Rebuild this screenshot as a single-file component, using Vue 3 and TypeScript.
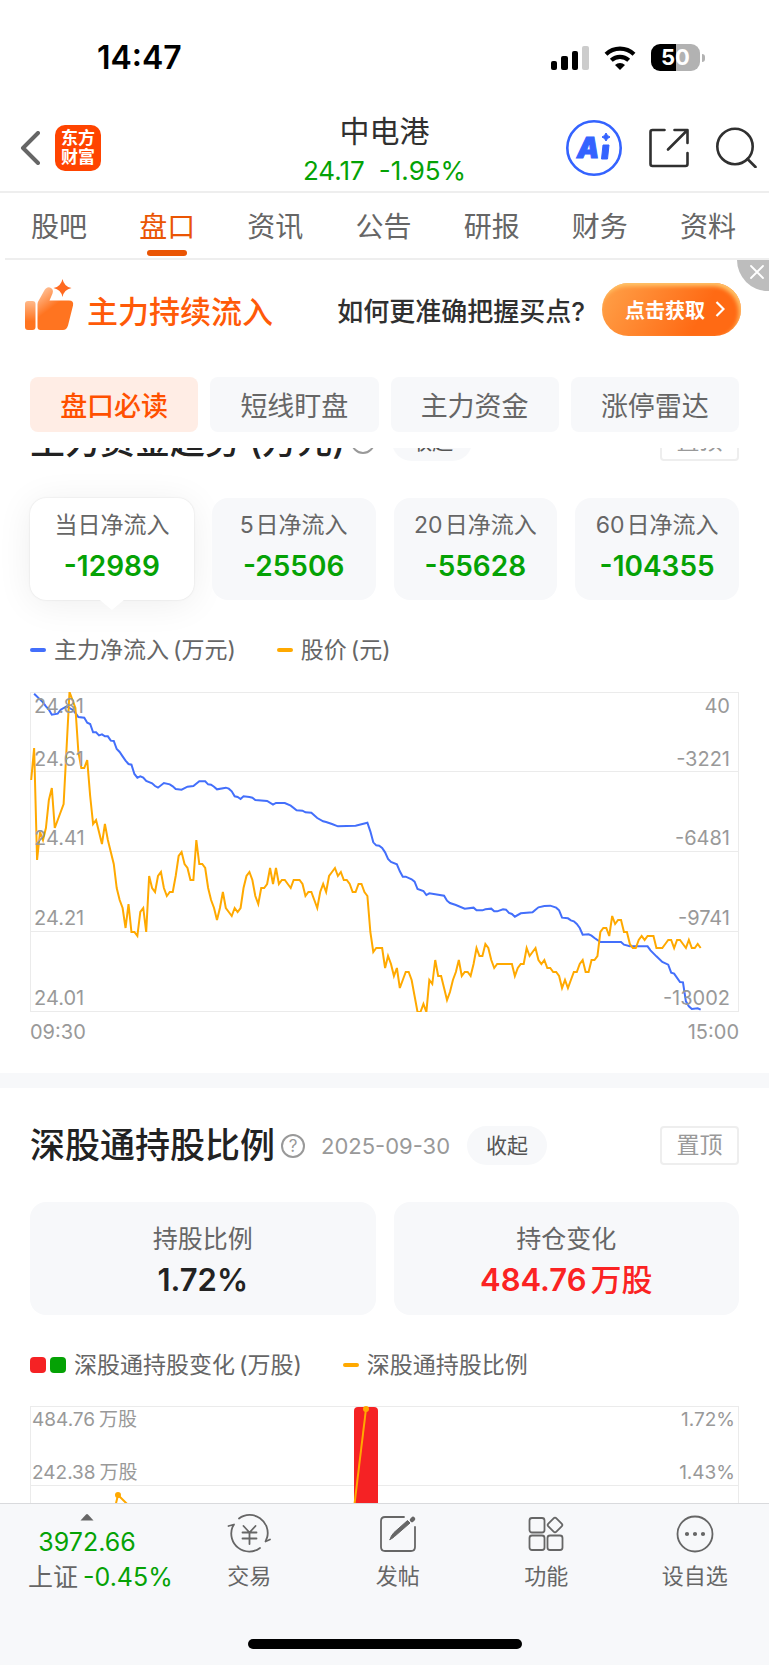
<script setup lang="ts">
import { ref } from 'vue'

type Point = [number, number]

const tabs = ['股吧', '盘口', '资讯', '公告', '研报', '财务', '资料']
const activeTab = ref('盘口')

const modules = ['盘口必读', '短线盯盘', '主力资金', '涨停雷达']
const activeModule = ref('盘口必读')

const periods = [
  { prefix: '', label: '当日净流入', value: '-12989' },
  { prefix: '5', label: '日净流入', value: '-25506' },
  { prefix: '20', label: '日净流入', value: '-55628' },
  { prefix: '60', label: '日净流入', value: '-104355' },
]
const activePeriod = ref(0)
const bannerOpen = ref(true)

const priceAxis = ['24.81', '24.61', '24.41', '24.21', '24.01']
const flowAxis = ['40', '-3221', '-6481', '-9741', '-13002']

// Cents below the session high of 24.81, one value per trading minute.
const priceDrops: number[] = [
  22, 14, 42, 35, 37, 34, 27, 24, 34, 32, 30, 28, 14, 0, 2, 4, 15, 19, 19, 17,
  26, 33, 32, 35, 38, 33, 37, 40, 43, 49, 52, 54, 59, 53, 60, 60, 61, 55, 54, 60,
  46, 49, 50, 46, 45, 49, 51, 50, 50, 46, 41, 40, 43, 44, 47, 47, 37, 43, 43, 44,
  49, 52, 54, 57, 54, 50, 54, 55, 56, 54, 55, 54, 49, 46, 45, 47, 51, 53, 49, 49,
  48, 44, 48, 44, 48, 47, 47, 48, 49, 47, 47, 47, 48, 51, 50, 50, 52, 54, 50, 48,
  50, 46, 45, 44, 46, 45, 47, 47, 48, 50, 50, 48, 48, 50, 51, 60, 65, 64, 64, 64,
  69, 66, 68, 71, 69, 74, 72, 70, 70, 72, 76, 80, 80, 78, 80, 72, 73, 67, 71, 71,
  74, 77, 75, 72, 70, 67, 71, 70, 70, 71, 68, 64, 66, 66, 63, 64, 67, 69, 68, 68,
  68, 68, 68, 68, 71, 69, 68, 68, 64, 66, 65, 64, 67, 68, 67, 69, 69, 70, 70, 71,
  74, 72, 74, 72, 70, 70, 68, 67, 70, 70, 67, 67, 66, 60, 59, 59, 61, 56, 58, 57,
  57, 60, 60, 63, 64, 64, 62, 61, 62, 61, 61, 61, 64, 64, 64, 63, 62, 62, 64, 62,
  62, 63, 64, 62, 64, 64, 63, 64,
]

// [minute, depth] pairs; depth runs from 0 (40) to 960 (-13002).
const flowPoints: Point[] = [
  [1, 5], [4, 31], [5, 43], [6, 53], [7, 68], [9, 65], [10, 53], [12, 43], [14, 53], [15, 63],
  [16, 75], [18, 77], [19, 92], [20, 96], [21, 121], [22, 121], [23, 130], [24, 127], [25, 133],
  [26, 133], [27, 146], [28, 147], [29, 171], [30, 180], [31, 193], [32, 206], [33, 216],
  [34, 218], [35, 246], [36, 257], [37, 253], [38, 257], [39, 267], [41, 274], [42, 282],
  [43, 287], [45, 273], [47, 277], [48, 283], [49, 291], [51, 293], [53, 284], [55, 282],
  [57, 268], [59, 268], [60, 277], [61, 278], [62, 284], [63, 292], [66, 287], [67, 290],
  [68, 298], [69, 313], [70, 315], [71, 321], [72, 313], [74, 315], [75, 317], [76, 324],
  [80, 327], [82, 338], [83, 333], [86, 333], [88, 341], [90, 355], [92, 356], [93, 361],
  [95, 362], [97, 378], [99, 388], [100, 390], [102, 396], [104, 403], [110, 401], [114, 392],
  [115, 418], [116, 451], [117, 460], [118, 461], [119, 468], [120, 481], [121, 501], [122, 510],
  [124, 517], [125, 538], [126, 554], [127, 554], [129, 562], [130, 569], [131, 591], [133, 597],
  [134, 609], [135, 604], [140, 611], [141, 626], [142, 633], [144, 639], [147, 650], [150, 647],
  [151, 655], [153, 655], [154, 652], [156, 650], [157, 658], [158, 658], [160, 652], [161, 653],
  [162, 663], [163, 666], [164, 674], [166, 664], [170, 661], [171, 653], [172, 646], [174, 642],
  [176, 641], [178, 647], [179, 655], [180, 677], [182, 679], [183, 685], [184, 688], [185, 696],
  [186, 708], [187, 728], [189, 727], [190, 731], [191, 738], [193, 750], [200, 750], [201, 758],
  [203, 763], [209, 763], [210, 775], [212, 793], [214, 810], [216, 818], [217, 842], [218, 845],
  [220, 870], [221, 871], [222, 928], [223, 943], [224, 951], [226, 949], [227, 953],
]

const toPoints = (points: Point[]): string => points.map(([x, y]) => `${x},${y}`).join(' ')
const priceLine = toPoints(priceDrops.map((drop, minute): Point => [minute, drop * 12]))
const flowLine = toPoints(flowPoints)
</script>

<template>
  <div class="app">
    <div class="status">
      <span class="clock">14:47</span>
      <div class="indicators">
        <svg class="signal" viewBox="0 0 38 24" aria-hidden="true">
          <rect x="0" y="15" width="6" height="9" rx="2" />
          <rect x="10" y="10" width="7" height="14" rx="2" />
          <rect x="21" y="5" width="6" height="19" rx="2" />
          <rect x="31" y="0" width="7" height="24" rx="2" fill="#ccc" />
        </svg>
        <svg class="wifi" viewBox="0 0 32 24" aria-hidden="true">
          <path d="M2 8.2a20.5 20.5 0 0 1 28 0" fill="none" stroke="#000" stroke-width="4.2" />
          <path d="M7.3 14.2a13 13 0 0 1 17.4 0" fill="none" stroke="#000" stroke-width="4.2" />
          <path d="M16 24l-5-5a7.4 7.4 0 0 1 10 0z" />
        </svg>
        <div class="battery"><span class="level">50</span><i class="cap"></i></div>
      </div>
    </div>

    <header class="nav">
      <div class="nav-left">
        <button class="icon-button" aria-label="返回">
          <svg width="20" height="34" viewBox="0 0 20 34"><path d="M18 2 3 17l15 15" fill="none" stroke="#666" stroke-width="4" stroke-linecap="round" stroke-linejoin="round" /></svg>
        </button>
        <a class="logo" href="#"><span>东方</span><span>财富</span></a>
      </div>
      <div class="quote">
        <h1>中电港</h1>
        <p><span>24.17</span><span>-1.95%</span></p>
      </div>
      <div class="nav-right">
        <button class="icon-button" aria-label="智能助手">
          <svg width="56" height="56" viewBox="0 0 56 56">
            <circle cx="28" cy="28" r="26.7" fill="none" stroke="#3463ff" stroke-width="2.6" />
            <text class="ai" x="11" y="38">A</text>
            <path d="M37 25h6l-1.500 14h-6z" fill="#3463ff" stroke="#3463ff" stroke-width="1" stroke-linejoin="round" />
            <path d="M40 13q1 3 4 4-3 1-4 4-1-3-4-4 3-1 4-4z" fill="#3463ff" stroke="#3463ff" stroke-width="1" />
          </svg>
        </button>
        <button class="icon-button" aria-label="分享">
          <svg width="40" height="40" viewBox="0 0 40 40" fill="none" stroke="#303030" stroke-width="2.600" stroke-linecap="round" stroke-linejoin="round">
            <path d="M15.500 2H3.500Q1.500 2 1.500 4v32q0 2 2 2h33q2 0 2-2V25" />
            <path d="M25.500 2h13v13M38 2.500 19 21.500" />
          </svg>
        </button>
        <button class="icon-button" aria-label="搜索">
          <svg width="41" height="41" viewBox="0 0 41 41" fill="none" stroke="#303030" stroke-width="2.600" stroke-linecap="round">
            <circle cx="19" cy="19.500" r="17.700" />
            <path d="m31.500 32 8 8" />
          </svg>
        </button>
      </div>
    </header>

    <nav class="tabs">
      <button
        v-for="tab in tabs"
        :key="tab"
        class="tab"
        :class="{ active: tab === activeTab }"
        @click="activeTab = tab"
      >{{ tab }}</button>
    </nav>

    <aside v-if="bannerOpen" class="banner">
      <svg class="thumb" width="49" height="52" viewBox="0 0 49 52" aria-hidden="true">
        <defs>
          <linearGradient id="cuff" x1="0" y1="0" x2="0" y2="1">
            <stop offset="0" stop-color="#ffb98a" /><stop offset="0.7" stop-color="#ff7420" />
          </linearGradient>
          <linearGradient id="hand" x1="0.1" y1="0" x2="0.6" y2="0.8">
            <stop offset="0" stop-color="#ffc9a4" /><stop offset="0.6" stop-color="#ff7420" />
          </linearGradient>
        </defs>
        <rect x="0" y="22" width="10.500" height="29" rx="3" fill="url(#cuff)" />
        <path d="M12.500 25q0-2 1.500-4l5-9q2.500-4.500 6-3.500 4 1.500 2.500 6l-3 7H44q5 0 4 5l-5 20q-1.500 4.500-5 4.500H15.500q-3 0-3-3z" fill="url(#hand)" />
        <path d="M37.500 0q1.500 7.500 9 9-7.500 1.500-9 9-1.500-7.500-9-9 7.500-1.500 9-9z" fill="#ff6a20" />
      </svg>
      <strong class="banner-title">主力持续流入</strong>
      <span class="banner-text">如何更准确把握买点?</span>
      <button class="banner-action">
        点击获取
        <svg width="10" height="16" viewBox="0 0 10 16"><path d="m1.500 1 7 7-7 7" fill="none" stroke="#fff" stroke-width="2.200" /></svg>
      </button>
      <button class="banner-close" aria-label="关闭" @click="bannerOpen = false">
        <svg width="14" height="14" viewBox="0 0 14 14"><path d="m1 1 12 12M13 1 1 13" stroke="#fff" stroke-width="1.800" stroke-linecap="round" /></svg>
      </button>
    </aside>

    <div class="modules">
      <button
        v-for="name in modules"
        :key="name"
        class="module"
        :class="{ active: name === activeModule }"
        @click="activeModule = name"
      >{{ name }}</button>
    </div>

    <main class="content">
      <div class="scrolled">
        <section class="section">
          <div class="section-head">
            <h2>主力资金趋势 (万元)</h2>
            <button class="help" aria-label="说明">?</button>
            <button class="fold">收起</button>
            <button class="pin">置顶</button>
          </div>
          <div class="cards four">
            <button
              v-for="(period, index) in periods"
              :key="period.value"
              class="card flow-card"
              :class="{ active: index === activePeriod }"
              @click="activePeriod = index"
            >
              <span class="card-label"><span v-if="period.prefix" class="number">{{ period.prefix }}</span>{{ period.label }}</span>
              <span class="card-value fall">{{ period.value }}</span>
            </button>
          </div>
          <div class="legend">
            <span class="legend-item"><i class="dash blue"></i>主力净流入<span class="unit">(万元)</span></span>
            <span class="legend-item"><i class="dash amber"></i>股价<span class="unit">(元)</span></span>
          </div>
          <div class="plot">
            <div class="grid-lines"><i v-for="row in 4" :key="row"></i></div>
            <svg class="lines" viewBox="-0.4 0 240.4 960" preserveAspectRatio="none" role="img" aria-label="主力净流入与股价走势">
              <polyline class="line flow-line" :points="flowLine" />
              <polyline class="line price-line" :points="priceLine" />
            </svg>
            <div class="axis"><span v-for="value in priceAxis" :key="value">{{ value }}</span></div>
            <div class="axis right"><span v-for="value in flowAxis" :key="value">{{ value }}</span></div>
          </div>
          <div class="times"><span>09:30</span><span>15:00</span></div>
        </section>

        <section class="section divided">
          <div class="section-head">
            <h2>深股通持股比例</h2>
            <button class="help" aria-label="说明">?</button>
            <time datetime="2025-09-30">2025-09-30</time>
            <button class="fold">收起</button>
            <button class="pin">置顶</button>
          </div>
          <div class="cards two">
            <div class="card holding-card">
              <span class="card-label">持股比例</span>
              <span class="card-value">1.72%</span>
            </div>
            <div class="card holding-card">
              <span class="card-label">持仓变化</span>
              <span class="card-value rise"><span class="number">484.76</span>万股</span>
            </div>
          </div>
          <div class="legend">
            <span class="legend-item"><i class="square red"></i><i class="square green"></i>深股通持股变化<span class="unit">(万股)</span></span>
            <span class="legend-item"><i class="dash amber"></i>深股通持股比例</span>
          </div>
          <div class="plot">
            <div class="grid-lines"><i v-for="row in 4" :key="row"></i></div>
            <svg class="lines" viewBox="0 0 709 320" preserveAspectRatio="none" role="img" aria-label="深股通持股变化与比例">
              <path d="M324 160V5q0-4 4-4h16q4 0 4 4v155z" fill="#f52224" />
              <polyline class="line ratio-line" points="66,180 88,89 160,160" />
              <polyline class="line ratio-line" points="317,160 336,3" />
              <path class="dot" d="M88 89h0M336 3h0" />
            </svg>
            <div class="axis tight"><span>484.76<b>万股</b></span><span>242.38<b>万股</b></span></div>
            <div class="axis tight right"><span>1.72%</span><span>1.43%</span></div>
          </div>
        </section>
      </div>
    </main>

    <footer class="toolbar">
      <div class="tools">
        <button class="index">
          <span class="index-top">
            <svg width="14" height="8" viewBox="0 0 14 8"><path d="M0.500 7.500 6 1.500q1-1 2 0l5.500 6z" fill="#666" /></svg>
            <span class="fall">3972.66</span>
          </span>
          <span class="index-name">上证<span class="fall index-change">-0.45%</span></span>
        </button>
        <button class="tool">
          <svg width="44" height="40" viewBox="0 0 44 40" fill="none" stroke="#666" stroke-width="1.800" stroke-linecap="round" stroke-linejoin="round">
            <path d="M12 4.500a18 18 0 0 1 28 19.500M1.500 12 7 10.500 5.500 13a18 18 0 0 0 27.500 21M43 25.500l-4.500 2 1.500-4" />
            <path d="m16.500 12 6 6.500 6-6.500M15.500 18.500h14M15.500 24.500h14M22.500 18.500V30" />
          </svg>
          交易
        </button>
        <button class="tool">
          <svg width="38" height="40" viewBox="0 0 38 40" fill="none" stroke="#666" stroke-width="1.800" stroke-linecap="round">
            <path d="M25 3H6Q2 3 2 7v26q0 4 4 4h26q4 0 4-4V13" />
            <path d="M11 25.500q1-4 4-7L28.500 6.500l2.500 2.500L15.500 22.500q-2 2-4.500 3z" fill="#666" stroke-width="1" />
            <path d="m33 6 1-1" stroke-width="4.500" />
          </svg>
          发帖
        </button>
        <button class="tool">
          <svg width="36" height="40" viewBox="0 0 36 40" fill="none" stroke="#666" stroke-width="1.800" stroke-linejoin="round">
            <rect x="1.500" y="4" width="15" height="14.500" rx="2.500" />
            <rect x="1.500" y="21.500" width="15" height="14.500" rx="2.500" />
            <rect x="19.500" y="21.500" width="15" height="14.500" rx="2.500" />
            <rect x="21.300" y="5.300" width="11.400" height="11.400" rx="2" transform="rotate(45 27 11)" />
          </svg>
          功能
        </button>
        <button class="tool">
          <svg width="38" height="40" viewBox="0 0 38 40" fill="none" stroke="#666" stroke-width="1.800">
            <circle cx="19" cy="20" r="17.500" />
            <path d="M11 20h0M19 20h0M27 20h0" stroke-width="4.200" stroke-linecap="round" />
          </svg>
          设自选
        </button>
      </div>
      <div class="home-bar"></div>
    </footer>
  </div>
</template>

<style>
body {
  margin: 0;
  background: #fff;
}
</style>

<style scoped>
.app {
  display: flex;
  flex-direction: column;
  height: 100vh;
  overflow: hidden;
  background: #fff;
  color: #666;
  font-family: Inter, "Noto Sans CJK SC", sans-serif;
  font-size: 22px;
}

.app *,
.app *::after {
  box-sizing: border-box;
}

button {
  margin: 0;
  padding: 0;
  border: 0;
  background: none;
  color: inherit;
  font: inherit;
  white-space: nowrap;
  cursor: pointer;
}

svg {
  display: block;
  flex: none;
}

h1,
h2,
p {
  margin: 0;
}

.fall {
  color: #05a205;
}

/* Status bar */
.status {
  display: flex;
  flex: none;
  align-items: center;
  justify-content: space-between;
  height: 104px;
  padding: 11px 64px 0 97px;
  color: #000;
}

.clock {
  font-size: 32px;
  font-weight: 600;
}

.indicators {
  display: flex;
  align-items: center;
}

.signal {
  width: 38px;
  height: 24px;
}

.wifi {
  width: 32px;
  height: 24px;
  margin: 0 15px;
}

.battery {
  display: flex;
  align-items: center;
  gap: 2px;
}

.level {
  width: 49px;
  height: 27px;
  border-radius: 9px;
  background: linear-gradient(90deg, #000 51%, #b2b2b2 51%);
  color: #fff;
  font-size: 22px;
  font-weight: 700;
  line-height: 27px;
  text-align: center;
}

.cap {
  width: 3px;
  height: 8px;
  border-radius: 0 3px 3px 0;
  background: #b2b2b2;
}

/* Navigation */
.nav {
  display: grid;
  flex: none;
  grid-template-columns: 1fr auto 1fr;
  align-items: center;
  height: 89px;
  padding: 0 12px;
  border-bottom: 2px solid #eee;
}

.nav-left,
.nav-right {
  display: flex;
  align-items: center;
}

.nav-left {
  gap: 15px;
  padding-left: 8px;
}

.nav-right {
  justify-content: flex-end;
  gap: 27px;
}

.logo {
  display: flex;
  flex-direction: column;
  align-items: center;
  justify-content: center;
  width: 46px;
  height: 46px;
  border-radius: 10px;
  background: #ff4400;
  color: #fff;
  font-size: 17px;
  font-weight: 700;
  line-height: 19px;
  text-decoration: none;
}

.quote {
  padding-top: 7px;
  text-align: center;
}

.quote h1 {
  color: #303030;
  font-size: 30px;
  font-weight: 400;
  line-height: 40px;
}

.quote p {
  display: flex;
  justify-content: center;
  gap: 14px;
  color: #05a205;
  font-size: 26px;
  line-height: 40px;
}

.ai {
  fill: #3463ff;
  stroke: #3463ff;
  stroke-width: 1;
  font-size: 28px;
  font-style: italic;
  font-weight: 900;
}

.tabs {
  display: flex;
  flex: none;
  height: 67px;
  margin-left: 5px;
  padding-right: 7px;
  border-bottom: 2px solid #eee;
}

.tab {
  position: relative;
  flex: 1;
  padding-bottom: 2px;
  font-size: 28px;
}

.tab.active {
  color: #ea5504;
}

.tab.active::after {
  position: absolute;
  bottom: 2px;
  left: 50%;
  width: 40px;
  height: 6px;
  margin-left: -20px;
  border-radius: 3px;
  background: #ea5504;
  content: "";
}

/* Promotion banner */
.banner {
  position: relative;
  display: flex;
  flex: none;
  align-items: center;
  height: 102px;
  padding: 0 28px 4px 25px;
}

.thumb {
  margin-bottom: 8px;
}

.banner-title {
  margin-left: 13px;
  color: #ff5a08;
  font-size: 31px;
  font-weight: 500;
}

.banner-text {
  margin-left: auto;
  color: #303030;
  font-size: 26px;
  font-weight: 500;
}

.banner-action {
  display: flex;
  align-items: center;
  justify-content: center;
  gap: 10px;
  width: 139px;
  height: 53px;
  margin-left: 17px;
  padding-left: 7px;
  border-radius: 27px;
  background: linear-gradient(120deg, #ff9a42 10%, #ff6a14 70%);
  box-shadow: inset -2px 3px 4px #ffc66b;
  color: #fff;
  font-size: 20px;
  font-weight: 700;
}

.banner-close {
  position: absolute;
  top: 0;
  right: 0;
  display: flex;
  justify-content: flex-end;
  width: 32px;
  height: 31px;
  padding: 5px 5px 0 0;
  border-radius: 0 0 0 32px;
  background: #bdbdbd;
}

.modules {
  display: grid;
  flex: none;
  grid-template-columns: repeat(4, 1fr);
  gap: 12px;
  padding: 15px 30px 16px;
}

.module {
  height: 55px;
  border-radius: 8px;
  background: #f7f8fa;
  font-size: 27px;
}

.module.active {
  background: #ffede5;
  color: #ff5000;
  font-weight: 500;
}

/* Scrolling content */
.content {
  flex: 1;
  min-height: 0;
  overflow: hidden;
}

.scrolled {
  margin-top: -64px;
}

.section {
  padding: 38px 30px 29px;
}

.divided {
  border-top: 15px solid #f7f8fa;
}

.section-head {
  display: flex;
  align-items: center;
  height: 39px;
  margin-bottom: 37px;
}

h2 {
  color: #222;
  font-size: 35px;
  font-weight: 500;
  line-height: 39px;
  white-space: nowrap;
}

.help {
  width: 24px;
  height: 24px;
  margin-left: 6px;
  border: 2px solid #999;
  border-radius: 50%;
  color: #999;
  font-size: 17px;
  line-height: 20px;
}

time {
  margin-left: 16px;
  color: #999;
  font-size: 22px;
}

.fold {
  width: 80px;
  height: 39px;
  margin-left: 17px;
  border-radius: 20px;
  background: #f7f8fa;
  color: #555;
  font-size: 21px;
  line-height: 37px;
}

.pin {
  width: 79px;
  height: 39px;
  margin-left: auto;
  border: 2px solid #eee;
  border-radius: 4px;
  color: #999;
  font-size: 23px;
  line-height: 35px;
}

.cards {
  display: grid;
  gap: 18px;
}

.four {
  grid-template-columns: repeat(4, 1fr);
}

.two {
  grid-template-columns: repeat(2, 1fr);
}

.card {
  position: relative;
  display: flex;
  flex-direction: column;
  align-items: center;
  border-radius: 16px;
  background: #f7f8fa;
  line-height: 40px;
}

.flow-card {
  height: 102px;
  padding-top: 7px;
  font-size: 23px;
}

.card-value {
  line-height: 42px;
}

.flow-card .card-value {
  font-size: 28px;
  font-weight: 600;
}

.flow-card.active {
  background: #fff;
  box-shadow: 0 0 2px rgb(0 0 0 / 12%), 0 4px 36px rgb(0 0 0 / 7%);
}

.flow-card.active::after {
  position: absolute;
  top: 100%;
  left: 50%;
  width: 24px;
  height: 10px;
  margin-left: -12px;
  background: #fff;
  clip-path: polygon(0 0, 100% 0, 50% 100%);
  content: "";
}

.number {
  margin-right: 2px;
}

.holding-card {
  height: 113px;
  padding-top: 17px;
  font-size: 25px;
}

.holding-card .card-value {
  color: #222;
  font-size: 31px;
  font-weight: 600;
}

.holding-card .rise {
  color: #fb2323;
  font-weight: 500;
}

.holding-card .number {
  margin-right: 4px;
  font-weight: 600;
}

.legend {
  display: flex;
  gap: 41px;
  height: 30px;
  margin: 35px 0 27px;
  font-size: 23px;
  line-height: 30px;
  white-space: nowrap;
}

.divided .legend {
  margin-bottom: 26px;
}

.legend-item {
  display: flex;
  align-items: center;
}

.unit {
  margin-left: 4px;
}

.dash {
  width: 16px;
  height: 4px;
  margin-right: 8px;
  border-radius: 2px;
}

.square {
  width: 16px;
  height: 16px;
  margin-right: 4px;
  border-radius: 4px;
}

.blue {
  background: #436ffb;
}

.amber {
  background: #ffa900;
}

.red {
  background: #f52224;
}

.green {
  margin-right: 8px;
  background: #05a205;
}

.plot {
  display: grid;
  grid-template: 320px / 1fr 1fr;
}

.grid-lines,
.lines {
  grid-area: 1 / 1 / 2 / 3;
  width: 100%;
  height: 320px;
}

.grid-lines {
  display: grid;
  grid-template-rows: 79px;
  grid-auto-rows: 80px;
  border: 1px solid #ebebeb;
  border-top: 0;
}

.grid-lines i {
  border-top: 1px solid #ebebeb;
}

.line,
.dot {
  fill: none;
  stroke-width: 2px;
  vector-effect: non-scaling-stroke;
}

.flow-line {
  stroke: #436ffb;
}

.price-line,
.ratio-line,
.dot {
  stroke: #ffa900;
}

.dot {
  stroke-width: 6px;
  stroke-linecap: round;
}

.axis {
  display: grid;
  grid-row: 1;
  grid-column: 1;
  grid-template-rows: 27px 79px;
  grid-auto-rows: 80px;
  align-items: center;
  height: 320px;
  padding: 0 9px 0 4px;
  color: #999;
  font-size: 20px;
  line-height: 24px;
  z-index: 1;
}

.axis.right {
  grid-column: 2;
  text-align: right;
}

.axis.tight {
  padding: 0 4px 0 2px;
  font-size: 19px;
}

.axis b {
  margin-left: 4px;
  font-weight: 400;
}

.times {
  display: flex;
  justify-content: space-between;
  height: 24px;
  margin-top: 8px;
  color: #999;
  font-size: 20px;
  line-height: 24px;
}

/* Bottom toolbar */
.toolbar {
  display: flex;
  flex: none;
  flex-direction: column;
  align-items: center;
  justify-content: space-between;
  height: 162px;
  padding-bottom: 16px;
  border-top: 1px solid #d9dadd;
  background: #f7f8fa;
}

.tools {
  display: grid;
  grid-template-columns: 175px repeat(4, 1fr);
  width: 100%;
}

.index {
  padding: 8px 0 0 28px;
  font-size: 25px;
  text-align: left;
}

.index-top {
  display: flex;
  flex-direction: column;
  align-items: center;
  width: 118px;
  line-height: 42px;
}

.index-name {
  display: block;
  line-height: 28px;
}

.index-change {
  margin-left: 5px;
}

.tool {
  display: flex;
  flex-direction: column;
  align-items: center;
  gap: 7px;
  padding-top: 10px;
  font-size: 22px;
  line-height: 30px;
}

.home-bar {
  width: 274px;
  height: 10px;
  border-radius: 5px;
  background: #000;
}
</style>
